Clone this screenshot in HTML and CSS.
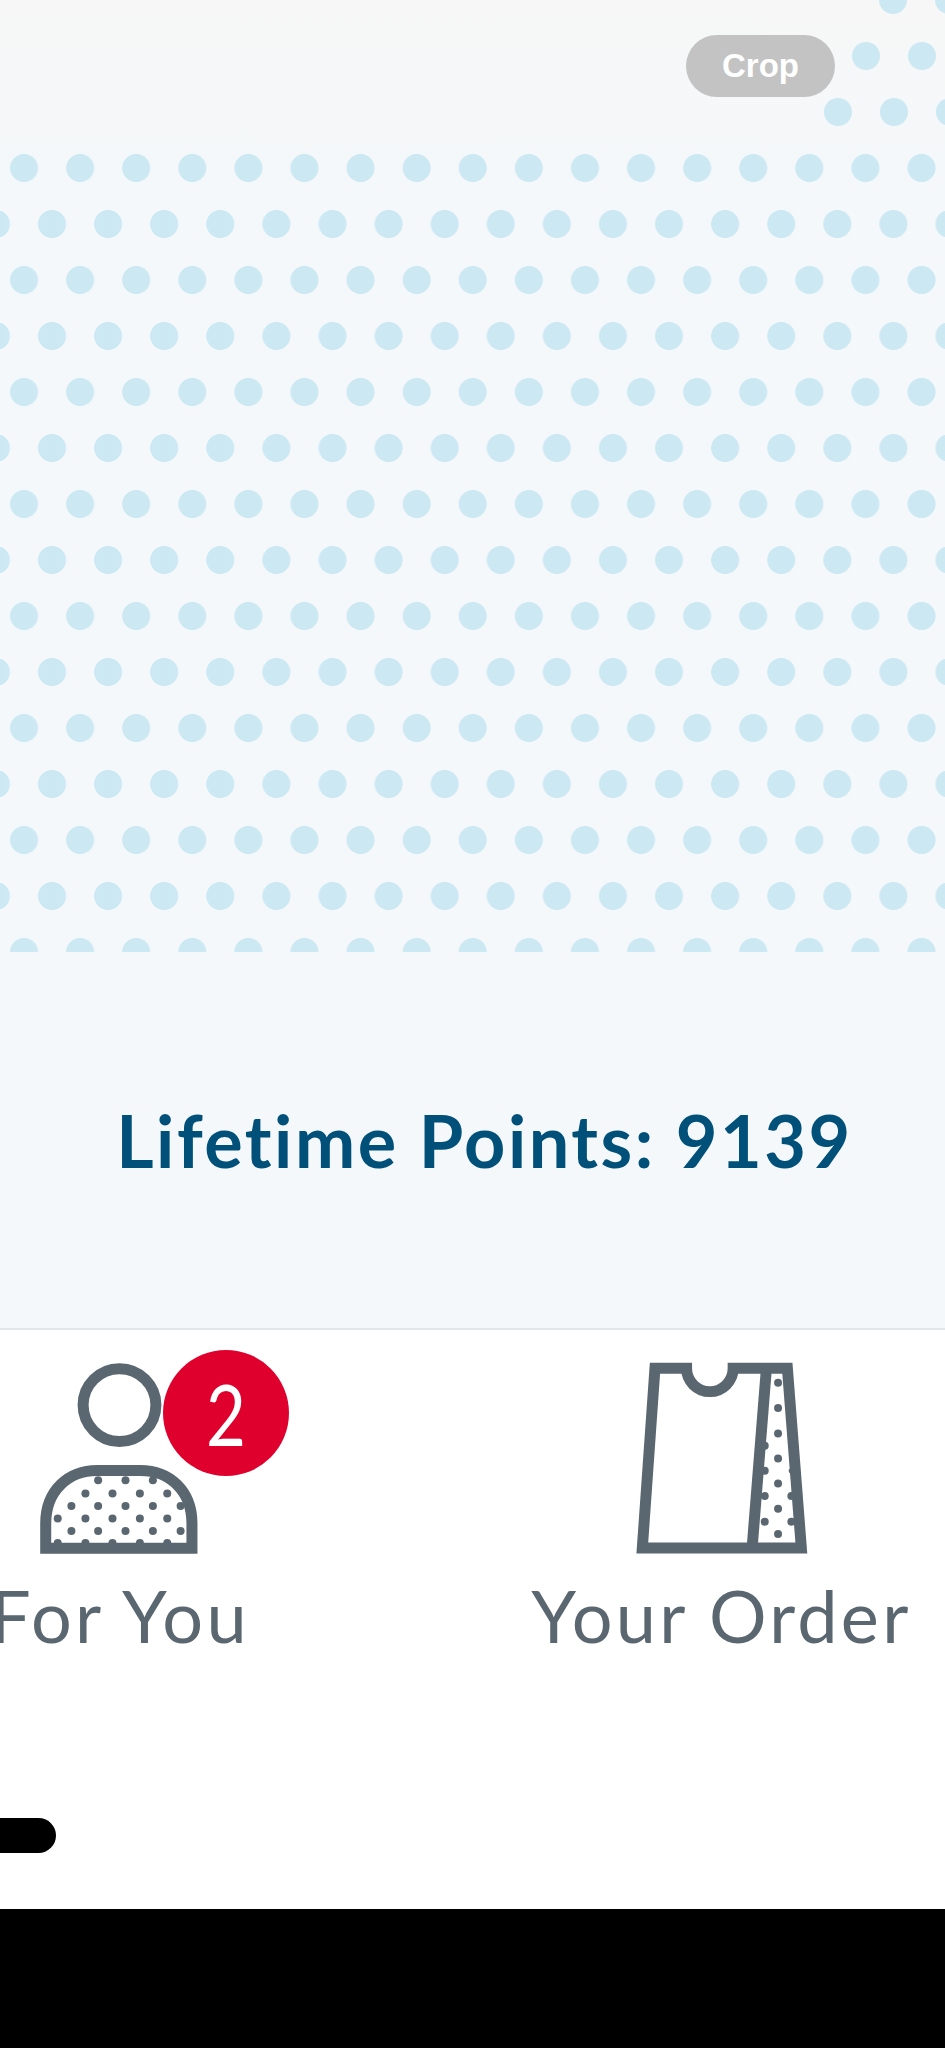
FILE: index.html
```html
<!DOCTYPE html>
<html lang="en">
<head>
  <meta charset="UTF-8">
  <meta name="viewport" content="width=device-width, initial-scale=1.0">
  <title>Lifetime Points</title>
  <link rel="stylesheet" href="styles.css">
</head>
<body>
  <div class="screen">
    <div class="hero">
      <div class="hero-top">
        <svg class="corner-dots" width="145" height="140" viewBox="800 0 145 140">
          <circle cx="893" cy="0" r="14"/><circle cx="949" cy="0" r="14"/>
          <circle cx="866" cy="56" r="14"/><circle cx="922" cy="56" r="14"/>
          <circle cx="838" cy="112" r="14"/><circle cx="894" cy="112" r="14"/><circle cx="950" cy="112" r="14"/>
        </svg>
        <span class="crop">Crop</span>
      </div>
      <div class="dot-field"></div>
    </div>

    <div class="points">Lifetime Points: 9139</div>

    <nav class="tabs">
      <div class="tab">
        <div class="tab-icon">
          <svg width="167" height="197" viewBox="110 120 500 590">
            <g class="line">
              <circle cx="357" cy="255" r="109"/>
              <path d="M136 684 V610 C136 510 205 451 290 451 H420 C505 451 574 510 574 610 V684 Z"/>
            </g>
            <g class="dots">
              <circle cx="293" cy="480" r="12"/><circle cx="375" cy="480" r="12"/><circle cx="457" cy="480" r="12"/>
              <circle cx="255" cy="520" r="12"/><circle cx="336" cy="520" r="12"/><circle cx="418" cy="520" r="12"/><circle cx="500" cy="520" r="12"/>
              <circle cx="213" cy="557" r="12"/><circle cx="293" cy="557" r="12"/><circle cx="375" cy="557" r="12"/><circle cx="457" cy="557" r="12"/><circle cx="540" cy="557" r="12"/>
              <circle cx="172" cy="595" r="12"/><circle cx="255" cy="595" r="12"/><circle cx="336" cy="595" r="12"/><circle cx="418" cy="595" r="12"/><circle cx="500" cy="595" r="12"/>
              <circle cx="213" cy="632" r="12"/><circle cx="293" cy="632" r="12"/><circle cx="375" cy="632" r="12"/><circle cx="457" cy="632" r="12"/><circle cx="540" cy="632" r="12"/>
              <circle cx="172" cy="668" r="12"/><circle cx="255" cy="668" r="12"/><circle cx="336" cy="668" r="12"/><circle cx="418" cy="668" r="12"/><circle cx="500" cy="668" r="12"/>
            </g>
          </svg>
          <span class="badge"><span class="badge-num">2</span></span>
        </div>
        <span class="tab-label">For You</span>
      </div>
      <div class="tab">
        <div class="tab-icon">
          <svg width="173" height="197" viewBox="400 120 520 590">
            <g class="line">
              <path d="M422 684 L460 144 H555 A70 70 0 0 0 695 144 H858 L900 684 Z"/>
              <path d="M795 144 L752 684"/>
            </g>
            <g class="dots">
              <circle cx="830" cy="187" r="12"/><circle cx="830" cy="263" r="12"/><circle cx="830" cy="340" r="12"/><circle cx="830" cy="415" r="12"/><circle cx="830" cy="490" r="12"/><circle cx="830" cy="566" r="12"/><circle cx="830" cy="642" r="12"/>
              <circle cx="790" cy="377" r="12"/><circle cx="790" cy="452" r="12"/><circle cx="790" cy="528" r="12"/><circle cx="790" cy="605" r="12"/>
              <circle cx="870" cy="452" r="8"/><circle cx="870" cy="528" r="12"/><circle cx="870" cy="605" r="12"/>
            </g>
          </svg>
        </div>
        <span class="tab-label">Your Order</span>
      </div>
    </nav>

    <div class="home-area">
      <div class="home-pill"></div>
    </div>
    <div class="black-bar"></div>
  </div>
</body>
</html>
```

FILE: styles.css
```css
body {
  margin: 0;
  background: #000;
  font-family: "Lato", "Liberation Sans", sans-serif;
}
.screen {
  width: 945px;
  height: 2048px;
  overflow: hidden;
  display: flex;
  flex-direction: column;
  background: #fff;
}

/* dotted area */
.hero {
  height: 952px;
  background: linear-gradient(180deg, #f7f7f7 0, #f4f8fa 200px);
}
.hero-top {
  position: relative;
  height: 140px;
  display: flex;
  justify-content: flex-end;
  align-items: flex-start;
  padding: 35px 110px 0 0;
  box-sizing: border-box;
}
.corner-dots {
  position: absolute;
  top: 0;
  right: 0;
  fill: #cce9f3;
}
.crop {
  width: 149px;
  height: 62px;
  border-radius: 31px;
  background: #c3c3c3;
  color: #fff;
  font-family: "Liberation Sans", sans-serif;
  font-weight: 700;
  font-size: 33px;
  line-height: 62px;
  text-align: center;
}
.dot-field {
  height: 812px;
  background-image:
    radial-gradient(circle at 24px 28px, #cce9f3 13.6px, transparent 14.4px),
    radial-gradient(circle at 24px 28px, #cce9f3 13.6px, transparent 14.4px);
  background-size: 56.1px 112px;
  background-position: 0 0, 28px 56px;
}

/* points */
.points {
  height: 376px;
  padding-left: 24px;
  background: #f4f8fa;
  display: flex;
  align-items: center;
  justify-content: center;
  color: #00507a;
  font-weight: 700;
  font-size: 72px;
  letter-spacing: 2.5px;
}

/* tab bar */
.tabs {
  display: grid;
  grid-template-columns: 602px 601px;
  margin-left: -181px;
  margin-right: -300px;
  height: 370px;
  border-top: 2px solid #e3e6e8;
}
.tab {
  display: flex;
  flex-direction: column;
  align-items: center;
  padding-top: 30px;
  color: #5b6770;
}
.tab-icon {
  position: relative;
  height: 197px;
  line-height: 0;
}
.line {
  fill: none;
  stroke: #5b6770;
  stroke-width: 33;
}
.dots {
  fill: #5b6770;
}
.badge {
  position: absolute;
  left: 126px;
  top: -10px;
  width: 126px;
  height: 126px;
  border-radius: 50%;
  background: #e0002d;
  color: #fff;
  display: flex;
  align-items: center;
  justify-content: center;
}
.badge-num {
  font-weight: 400;
  font-size: 86px;
  line-height: 1;
  transform: scaleX(0.8);
}
.tab-label {
  margin-top: 15px;
  font-size: 72px;
  line-height: 86px;
  letter-spacing: 3.3px;
  white-space: nowrap;
}

/* bottom */
.home-area {
  height: 209px;
  padding-top: 118px;
  box-sizing: border-box;
}
.home-pill {
  width: 56px;
  height: 35px;
  border-radius: 0 18px 18px 0;
  background: #000;
}
.black-bar {
  flex: 1;
  background: #000;
}
```
